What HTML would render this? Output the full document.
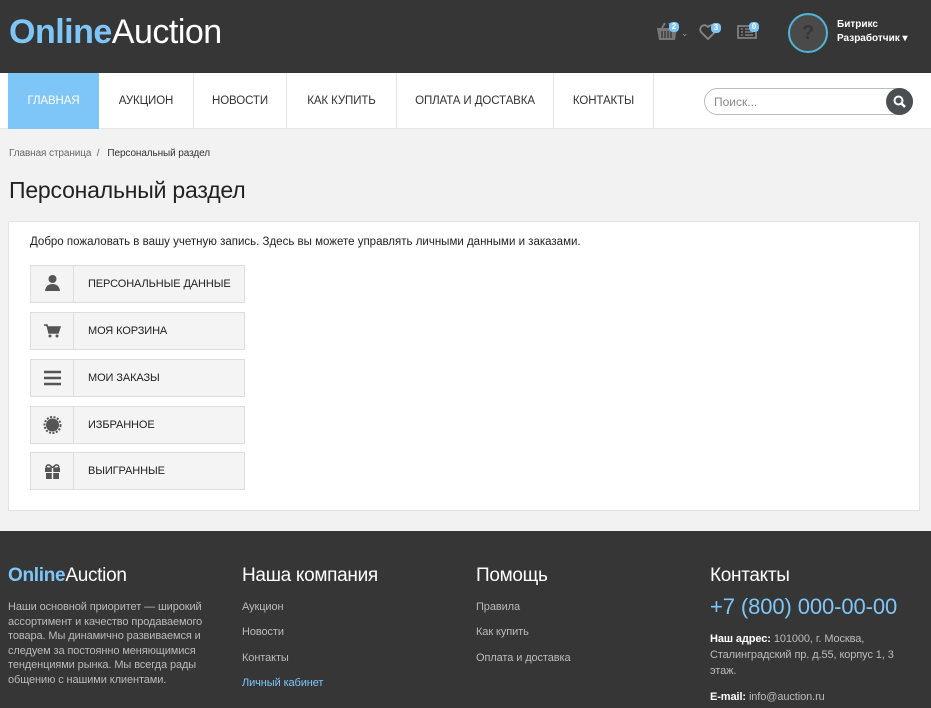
<!DOCTYPE html>
<html><head><meta charset="utf-8"><style>
*{margin:0;padding:0;box-sizing:border-box}
body{width:931px;height:708px;overflow:hidden;background:#f2f2f2;font-family:"Liberation Sans",sans-serif;color:#333}
.hdr{height:73px;background:#363636;position:relative}
.logo{position:absolute;left:9px;top:13px;font-size:34px;color:#fff;letter-spacing:-0.5px}
.logo b{color:#7ec6f8;font-weight:bold}
.ic{position:absolute;top:22px}
.badge{position:absolute;background:#7ec6f8;color:#fff;font-size:8px;font-weight:bold;border-radius:4px;width:10px;height:10px;text-align:center;line-height:10px}
.av{position:absolute;left:788px;top:13px;width:40px;height:40px;border-radius:50%;border:2px solid #52b4d6;background:#4a4a4a;color:#363636;font-size:20px;font-weight:bold;text-align:center;line-height:36px}
.user{position:absolute;left:837px;top:18px;color:#fff;font-size:10px;font-weight:bold;line-height:14px}
.nav{height:56px;background:#fff;position:relative;border-bottom:1px solid #e5e5e5}
.nav a{position:absolute;top:0;height:56px;line-height:56px;font-size:11.5px;color:#333;text-decoration:none;text-align:center;border-right:1px solid #e5e5e5;letter-spacing:-0.1px}
.search{position:absolute;left:704px;top:88px;width:209px;height:27px;border:1px solid #bbb;border-radius:14px;background:#fff;font-size:12px;color:#888;padding:6px 0 0 9px}
.sbtn{position:absolute;left:886px;top:88px;width:27px;height:27px;border-radius:50%;background:#4a5052}
.bc{position:absolute;top:148px;left:9px;font-size:10px;color:#666;letter-spacing:-0.1px}
h1{position:absolute;top:177px;left:9px;font-size:23px;font-weight:normal;color:#222;letter-spacing:-0.2px}
.box{position:absolute;left:8px;top:221px;width:912px;height:290px;background:#fff;border:1px solid #e3e3e3}
.box p{position:absolute;left:21px;top:14px;font-size:11.5px;color:#222;letter-spacing:0}
.btn{position:absolute;left:21px;width:215px;height:38px;border:1px solid #ddd;background:#f4f4f4;font-size:11px;color:#222;letter-spacing:-0.1px}
.btn .i{position:absolute;left:0;top:0;width:43px;height:36px;border-right:1px solid #ddd}
.btn span{position:absolute;left:57px;top:12px}
.ft{position:absolute;top:531px;left:0;width:931px;height:177px;background:#363636;color:#bbb}
.ft h3{position:absolute;top:34px;font-size:19px;font-weight:normal;color:#fff;letter-spacing:-0.3px}
.ft .l{position:absolute;font-size:11px;color:#bbb;letter-spacing:-0.1px}
</style></head><body>
<div class="hdr">
<div class="logo"><b>Online</b>Auction</div>
<svg class="ic" style="left:656px" width="22" height="20" viewBox="0 0 22 20"><path d="M1 6h20l-2 12H3z" fill="#777"/><path d="M6 6l3-5M16 6l-3-5" stroke="#777" stroke-width="2"/><path d="M6 9v7M9 9v7M12 9v7M15 9v7" stroke="#363636" stroke-width="1.3"/></svg>
<div class="badge" style="left:669px;top:22px">2</div>
<div style="position:absolute;left:681px;top:28px;color:#999;font-size:9px">⌄</div>
<svg class="ic" style="left:699px;top:24px" width="18" height="16" viewBox="0 0 18 16"><path d="M9 15L2 8a4 4 0 0 1 7-5a4 4 0 0 1 7 5z" fill="none" stroke="#888" stroke-width="1.8"/></svg>
<div class="badge" style="left:711px;top:23px">3</div>
<svg class="ic" style="left:737px;top:25px" width="20" height="14" viewBox="0 0 20 14"><rect x="1" y="1" width="18" height="12" fill="none" stroke="#888" stroke-width="1.6"/><path d="M4 4h2M8 4h8M4 7h2M8 7h8M4 10h2M8 10h8" stroke="#888" stroke-width="1.3"/></svg>
<div class="badge" style="left:749px;top:22px">0</div>
<div class="av">?</div>
<div class="user">Битрикс<br>Разработчик ▾</div>
</div>
<div class="nav">
<a style="left:8px;width:91px;background:#7ec6f8;color:#fff;border:none">ГЛАВНАЯ</a>
<a style="left:99px;width:95px">АУКЦИОН</a>
<a style="left:194px;width:93px">НОВОСТИ</a>
<a style="left:287px;width:110px">КАК КУПИТЬ</a>
<a style="left:397px;width:157px">ОПЛАТА И ДОСТАВКА</a>
<a style="left:554px;width:100px">КОНТАКТЫ</a>
</div>
<div class="search">Поиск...</div>
<div class="sbtn"><svg width="27" height="27" viewBox="0 0 27 27"><circle cx="12.5" cy="12.5" r="4" fill="none" stroke="#fff" stroke-width="2"/><path d="M15.5 15.5l3.5 3.5" stroke="#fff" stroke-width="2.5"/></svg></div>
<div class="bc">Главная страница &nbsp;/&nbsp;&nbsp; <span style="color:#333">Персональный раздел</span></div>
<h1>Персональный раздел</h1>
<div class="box">
<p>Добро пожаловать в вашу учетную запись. Здесь вы можете управлять личными данными и заказами.</p>
<div class="btn" style="top:43px"><div class="i"><svg width="43" height="36" viewBox="0 0 43 36"><circle cx="21.5" cy="13" r="4" fill="#555"/><path d="M14 25q1-7 7.5-7t7.5 7z" fill="#555"/></svg></div><span>ПЕРСОНАЛЬНЫЕ ДАННЫЕ</span></div>
<div class="btn" style="top:90px"><div class="i"><svg width="43" height="36" viewBox="0 0 43 36"><path d="M13 12h3l2 8h9l2-6H17" fill="#555" stroke="#555" stroke-width="1.5"/><circle cx="19" cy="23" r="1.5" fill="#555"/><circle cx="26" cy="23" r="1.5" fill="#555"/></svg></div><span>МОЯ КОРЗИНА</span></div>
<div class="btn" style="top:137px"><div class="i"><svg width="43" height="36" viewBox="0 0 43 36"><path d="M13 12h17M13 18h17M13 24h17" stroke="#555" stroke-width="2.5"/></svg></div><span>МОИ ЗАКАЗЫ</span></div>
<div class="btn" style="top:184px"><div class="i"><svg width="43" height="36" viewBox="0 0 43 36"><circle cx="21.5" cy="18" r="6.5" fill="#555"/><circle cx="21.5" cy="18" r="8" fill="none" stroke="#555" stroke-width="2" stroke-dasharray="2 1.5"/></svg></div><span>ИЗБРАННОЕ</span></div>
<div class="btn" style="top:230px"><div class="i"><svg width="43" height="36" viewBox="0 0 43 36"><rect x="14" y="15" width="15" height="4" fill="#555"/><rect x="15" y="20" width="13" height="6" fill="#555"/><path d="M21.5 15q-4-5-6-2t6 2q4-5 6-2t-6 2" fill="none" stroke="#555" stroke-width="1.5"/><path d="M21.5 15v11" stroke="#f4f4f4" stroke-width="1.5"/></svg></div><span>ВЫИГРАННЫЕ</span></div>
</div>
<div class="ft">
<h3 style="left:8px"><b style="color:#7ec6f8">Online</b>Auction</h3>
<div class="l" style="left:8px;top:69px;width:212px;line-height:14.5px">Наши основной приоритет — широкий ассортимент и качество продаваемого товара. Мы динамично развиваемся и следуем за постоянно меняющимися тенденциями рынка. Мы всегда рады общению с нашими клиентами.</div>
<h3 style="left:242px">Наша компания</h3>
<div class="l" style="left:242px;top:70px">Аукцион</div>
<div class="l" style="left:242px;top:95px">Новости</div>
<div class="l" style="left:242px;top:121px">Контакты</div>
<div class="l" style="left:242px;top:146px;color:#7ec6f8">Личный кабинет</div>
<h3 style="left:476px">Помощь</h3>
<div class="l" style="left:476px;top:70px">Правила</div>
<div class="l" style="left:476px;top:95px">Как купить</div>
<div class="l" style="left:476px;top:121px">Оплата и доставка</div>
<h3 style="left:710px">Контакты</h3>
<div class="l" style="left:710px;top:63px;font-size:22px;color:#7ec6f8">+7 (800) 000-00-00</div>
<div class="l" style="left:710px;top:100px;width:200px;line-height:16px"><b style="color:#fff">Наш адрес:</b> 101000, г. Москва, Сталинградский пр. д.55, корпус 1, 3 этаж.</div>
<div class="l" style="left:710px;top:160px"><b style="color:#fff">E-mail:</b> info@auction.ru</div>
</div>
</body></html>
